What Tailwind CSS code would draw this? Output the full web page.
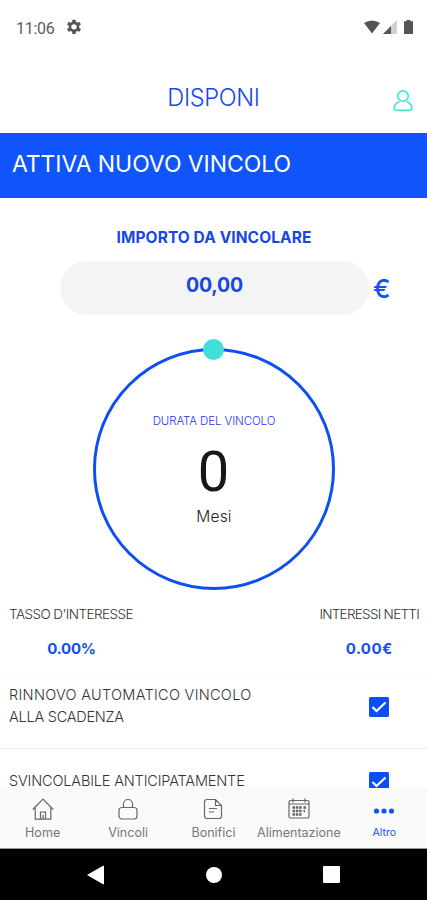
<!DOCTYPE html>
<html lang="it">
<head>
<meta charset="utf-8">
<meta name="viewport" content="width=device-width, initial-scale=1">
<title>Disponi</title>
<script src="https://cdn.jsdelivr.net/npm/@tailwindcss/browser@4"></script>
</head>
<body class="bg-white">
<div class="flex h-[900px] w-[427px] flex-col overflow-hidden bg-white font-['Inter',sans-serif] whitespace-nowrap text-[#333]">
  <header class="h-[133px] shrink-0">
    <div class="flex h-[54px] items-center pr-[14px] pl-4 font-['Roboto',sans-serif]">
      <span class="mt-[3px] w-[50px] text-[16px] tracking-[-0.300px] text-[#5c5c5c]">11:06</span>
      <svg class="size-4" viewBox="0 0 24 24" fill="#555"><path fill-rule="evenodd" d="M9.700 1h4.600l.6 3.300 2 1.200 3.200-1.300 2.300 4-2.600 2.100v2.800l2.600 2.100-2.300 4-3.200-1.200-2 1.100-.6 3.400H9.700l-.6-3.400-2-1.100-3.200 1.200-2.300-4 2.600-2.100v-2.800L1.600 8.200l2.300-4 3.200 1.300 2-1.200zM12 7.700a4.100 4.100 0 1 0 0 8.200 4.100 4.100 0 0 0 0-8.200z"/></svg>
      <div class="ml-auto flex items-center">
        <svg class="h-[14px] w-4" viewBox="0 0 16 14" fill="#555"><path d="M0 3Q8-2 16 3L8 13.500z"/></svg>
        <svg class="ml-[3px] h-[14px] w-[14px]" viewBox="0 0 14 14"><path d="M14 0v14H0z" fill="#d0d0d0"/><path d="M8 6v8H0z" fill="#555"/></svg>
        <svg class="ml-[7px] h-[14px] w-[9px]" viewBox="0 0 9 14" fill="#555"><path d="M2.500 0h4v1.300H9V14H0V1.300h2.500z"/></svg>
      </div>
    </div>
    <div class="grid h-[79px] grid-cols-[60px_1fr_60px] items-center">
      <span></span>
      <h1 class="mt-[9px] text-center text-[23.500px] leading-[30px] font-light tracking-[-0.300px] text-[#1747f5]">DISPONI</h1>
      <svg class="mt-[14px] ml-[26px] h-[23px] w-[20px]" viewBox="0 0 21 23" fill="none" stroke="#4be2dd" stroke-width="1.800"><circle cx="10.500" cy="6.800" r="5.500"/><path d="M7 12.500C3.500 13.800 1.200 16 1.200 19.500c0 1.500.7 2.300 2.200 2.300h14.200c1.500 0 2.200-.8 2.200-2.300 0-3.500-2.300-5.700-5.800-7"/></svg>
    </div>
  </header>

  <div class="h-[65px] shrink-0 bg-[#1055fb] pt-[15px] pl-3">
    <h2 class="text-[23px] leading-[32px] font-normal tracking-[-0.080px] text-white">ATTIVA NUOVO VINCOLO</h2>
  </div>

  <main class="flex h-[590px] shrink-0 flex-col overflow-hidden">
    <div class="mt-[30px] pl-px text-center text-[15.500px] leading-5 font-bold text-[#1747e5]"><span class="tracking-[0.080px]">IMPORTO DA VINCOLARE</span></div>
    <div class="mt-[13px] ml-[60px] flex shrink-0 items-center">
      <div class="h-[54px] w-[309px] rounded-full bg-[#f4f4f4] pt-[9px] text-center text-[19.500px] leading-[30px] font-bold text-[#1747e5]"><span class="tracking-[-0.200px]">00,00</span></div>
      <span class="mt-[2px] ml-[4px] text-[26px] leading-[30px] font-medium text-[#1552ee]">€</span>
    </div>
    <div class="relative mx-auto mt-[33px] flex size-[242px] shrink-0 flex-col items-center rounded-full border-[3px] border-[#0f4ff2]">
      <i class="absolute -top-[12px] left-[107.500px] size-[21px] rounded-full bg-[#40e0d8]"></i>
      <span class="mt-[62px] ml-px text-[11.500px] leading-4 font-light tracking-[-0.100px] text-[#1e35f2]">DURATA DEL VINCOLO</span>
      <span class="mt-[13px] font-['Roboto',sans-serif] text-[56px] leading-[60px] font-normal text-[#171717]">0</span>
      <span class="mt-[5px] ml-px text-[15.500px] leading-5 font-light tracking-[0.200px] text-[#222]">Mesi</span>
    </div>
    <div class="mt-[14px] flex shrink-0 justify-between pr-[8px] pl-[9px] text-center text-[13.500px] leading-5 font-light">
      <div><p><span class="tracking-[-0.550px]">TASSO D'INTERESSE</span></p><p class="mt-[15px] pl-px text-[15px] font-bold text-[#0f4ff5]"><span class="tracking-[-0.200px]">0.00%</span></p></div>
      <div><p><span class="tracking-[-0.720px]">INTERESSI NETTI</span></p><p class="mt-[15px] text-[15px] font-bold text-[#0f4ff5]"><span class="tracking-[0.400px]">0.00€</span></p></div>
    </div>
    <div class="mt-[15px] flex h-[75px] shrink-0 items-start justify-between border-t border-b border-t-[#fafafa] border-b-[#eee] pr-[38px] pl-[9px] text-[14.500px] leading-[22px] font-light">
      <p class="pt-[9px]"><span class="tracking-[0.290px]">RINNOVO AUTOMATICO VINCOLO</span><br><span class="tracking-[-0.250px]">ALLA SCADENZA</span></p>
      <svg class="mt-[22px] size-[20px]" viewBox="0 0 20 20"><rect width="20" height="20" rx="1.500" fill="#0b4df8"/><path d="m3.500 10 4 4 9-8.500" fill="none" stroke="#fff" stroke-width="2.200"/></svg>
    </div>
    <div class="flex h-[70px] shrink-0 items-start justify-between pr-[38px] pl-[9px] text-[14.500px] leading-[22px] font-light">
      <p class="pt-[21px]"><span class="tracking-[-0.170px]">SVINCOLABILE ANTICIPATAMENTE</span></p>
      <svg class="mt-[23px] size-[20px]" viewBox="0 0 20 20"><rect width="20" height="20" rx="1.500" fill="#0b4df8"/><path d="m3.500 10 4 4 9-8.500" fill="none" stroke="#fff" stroke-width="2.200"/></svg>
    </div>
  </main>

  <nav class="grid h-[61px] shrink-0 grid-cols-5 border-b border-[#999] bg-[#fafafa] pt-[10px] text-[12.500px] leading-4 text-[#777]">
    <a class="flex flex-col items-center gap-[5px]"><svg class="size-[22px]" viewBox="0 0 22 22" fill="none" stroke="#666" stroke-width="1.200"><path d="M.8 11.500 11 1.200l10.200 10.300M3.200 9.500v11.700h15.600V9.500M8.500 21v-7h5v7M11 17v4"/></svg><span class="tracking-[0.100px]">Home</span></a>
    <a class="flex flex-col items-center gap-[5px]"><svg class="size-[22px]" viewBox="0 0 22 22" fill="none" stroke="#666" stroke-width="1.200"><rect x="2" y="9.500" width="18" height="11.500" rx="3"/><path d="M6.500 9.500V6a4.500 4.500 0 0 1 9 0v3.500"/></svg><span>Vincoli</span></a>
    <a class="flex flex-col items-center gap-[5px]"><svg class="size-[22px]" viewBox="0 0 22 22" fill="none" stroke="#666" stroke-width="1.200"><path d="M5 1.500h8.500l6 6V18q0 2.500-2.500 2.500H5Q2.500 20.500 2.500 18V4Q2.500 1.500 5 1.500zM13.500 1.500v6h6M7 10.500h8M7 14h5"/></svg><span>Bonifici</span></a>
    <a class="flex flex-col items-center gap-[5px]"><svg class="size-[22px]" viewBox="0 0 22 22" fill="none" stroke="#666" stroke-width="1.200"><rect x="1" y="2.500" width="20" height="17.500" rx="1.500"/><path d="M1 6h20M5 .5v4M17 .5v4"/><path d="M4.500 9.500h9.500m1.500 0h2.500M4.500 13h9.500m1.500 0h1.500M4.500 16.500h9.500" stroke-width="2.500" stroke-dasharray="2.500 .8"/></svg><span>Alimentazione</span></a>
    <a class="flex flex-col items-center gap-[5px] text-[10.500px] text-[#1552f5]"><svg class="size-[22px]" viewBox="0 0 22 22" fill="#1552f5"><circle cx="3.500" cy="13" r="2.600"/><circle cx="11" cy="13" r="2.600"/><circle cx="18.500" cy="13" r="2.600"/></svg><span>Altro</span></a>
  </nav>
  <div class="flex h-[51px] shrink-0 items-center bg-black pl-[87px]">
    <svg class="h-[20px] w-[17px]" viewBox="0 0 17 20" fill="#fff"><path d="M0 10 16 .8q1-.5 1 .5v17.400q0 1-1 .5z"/></svg>
    <span class="ml-[102px] size-4 rounded-full bg-white"></span>
    <span class="ml-[101px] size-[17px] rounded-[1px] bg-white"></span>
  </div>
</div>
</body>
</html>
